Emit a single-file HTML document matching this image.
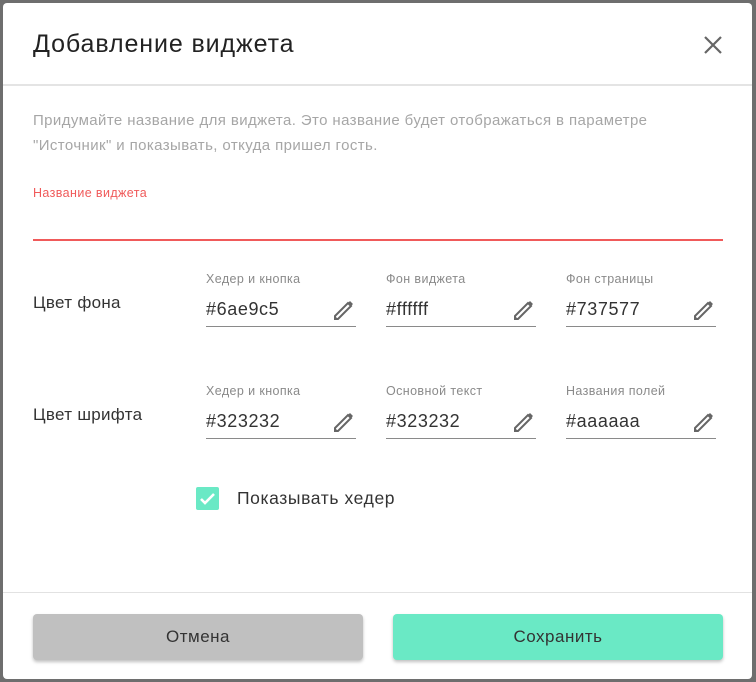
<!DOCTYPE html>
<html><head><meta charset="utf-8"><style>
*{box-sizing:border-box;margin:0;padding:0}
html,body{width:756px;height:682px;overflow:hidden;background:#6e6e6e;font-family:"Liberation Sans",sans-serif}
.dlg{position:absolute;left:3px;top:3px;width:749px;height:676px;background:#fff;border-radius:4px}
.title{position:absolute;left:30px;top:27px;font-size:25px;letter-spacing:0.9px;color:#222}
.close{position:absolute;left:700px;top:32px}
.hl{position:absolute;left:0;right:0;top:81px;height:2px;background:#e4e4e4}
.desc{position:absolute;left:30px;top:105px;font-size:15px;letter-spacing:0.4px;line-height:25px;color:#a6a6a6}
.nl{position:absolute;left:30px;top:183px;font-size:12.5px;letter-spacing:0.4px;color:#f05a5a}
.nline{position:absolute;left:30px;top:236px;width:690px;height:2px;background:#f05a5a}
.row{position:absolute;left:30px;font-size:17px;letter-spacing:0.3px;color:#333}
.f{position:absolute;width:150px}
.f .l{font-size:12.5px;letter-spacing:0.4px;color:#8a8a8a}
.f .v{position:absolute;top:27px;left:0;font-size:18px;letter-spacing:0.6px;color:#333}
.f .u{position:absolute;top:54px;left:0;width:150px;height:1px;background:#8a8a8a}
.f svg{position:absolute;left:124px;top:26px}
.cb{position:absolute;left:193px;top:484px;width:23px;height:23px;background:#6ae9c5;border-radius:2px}
.cbl{position:absolute;left:234px;top:485px;font-size:17.5px;letter-spacing:0.6px;color:#333}
.fl{position:absolute;left:0;right:0;top:589px;height:1px;background:#e2e2e2}
.btn{position:absolute;top:611px;width:330px;height:46px;border-radius:4px;font-size:17px;letter-spacing:0.5px;color:#333;text-align:center;line-height:46px;box-shadow:0 2px 3px rgba(0,0,0,.25)}
</style></head><body>
<div class="dlg">
<div class="title">Добавление виджета</div>
<svg class="close" width="20" height="20" viewBox="0 0 20 20"><path d="M2 2L18 18M18 2L2 18" stroke="#666" stroke-width="2.2"/></svg>
<div class="hl"></div>
<div class="desc">Придумайте название для виджета. Это название будет отображаться в параметре<br>"Источник" и показывать, откуда пришел гость.</div>
<div class="nl">Название виджета</div>
<div class="nline"></div>
<div class="row" style="top:290px">Цвет фона</div>
<div class="row" style="top:402px">Цвет шрифта</div>

<div class="f" style="left:203px;top:269px"><div class="l">Хедер и кнопка</div><div class="v">#6ae9c5</div><div class="u"></div><svg width="26" height="26" viewBox="0 0 26 26"><path d="M5 18L18 5l3 3L8 21H5z" fill="none" stroke="#666" stroke-width="2"/><path d="M18 5l2-2 3 3-2 2z M4 22l1-4 3 3z" fill="#666"/></svg></div>
<div class="f" style="left:383px;top:269px"><div class="l">Фон виджета</div><div class="v">#ffffff</div><div class="u"></div><svg width="26" height="26" viewBox="0 0 26 26"><path d="M5 18L18 5l3 3L8 21H5z" fill="none" stroke="#666" stroke-width="2"/><path d="M18 5l2-2 3 3-2 2z M4 22l1-4 3 3z" fill="#666"/></svg></div>
<div class="f" style="left:563px;top:269px"><div class="l">Фон страницы</div><div class="v">#737577</div><div class="u"></div><svg width="26" height="26" viewBox="0 0 26 26"><path d="M5 18L18 5l3 3L8 21H5z" fill="none" stroke="#666" stroke-width="2"/><path d="M18 5l2-2 3 3-2 2z M4 22l1-4 3 3z" fill="#666"/></svg></div>

<div class="f" style="left:203px;top:381px"><div class="l">Хедер и кнопка</div><div class="v">#323232</div><div class="u"></div><svg width="26" height="26" viewBox="0 0 26 26"><path d="M5 18L18 5l3 3L8 21H5z" fill="none" stroke="#666" stroke-width="2"/><path d="M18 5l2-2 3 3-2 2z M4 22l1-4 3 3z" fill="#666"/></svg></div>
<div class="f" style="left:383px;top:381px"><div class="l">Основной текст</div><div class="v">#323232</div><div class="u"></div><svg width="26" height="26" viewBox="0 0 26 26"><path d="M5 18L18 5l3 3L8 21H5z" fill="none" stroke="#666" stroke-width="2"/><path d="M18 5l2-2 3 3-2 2z M4 22l1-4 3 3z" fill="#666"/></svg></div>
<div class="f" style="left:563px;top:381px"><div class="l">Названия полей</div><div class="v">#aaaaaa</div><div class="u"></div><svg width="26" height="26" viewBox="0 0 26 26"><path d="M5 18L18 5l3 3L8 21H5z" fill="none" stroke="#666" stroke-width="2"/><path d="M18 5l2-2 3 3-2 2z M4 22l1-4 3 3z" fill="#666"/></svg></div>

<div class="cb"><svg width="23" height="23" viewBox="0 0 23 23"><path d="M5 12l4 4 9-9" fill="none" stroke="#fff" stroke-width="2.6"/></svg></div>
<div class="cbl">Показывать хедер</div>
<div class="fl"></div>
<div class="btn" style="left:30px;background:#c0c0c0">Отмена</div>
<div class="btn" style="left:390px;background:#6ae9c5">Сохранить</div>
</div>
</body></html>
